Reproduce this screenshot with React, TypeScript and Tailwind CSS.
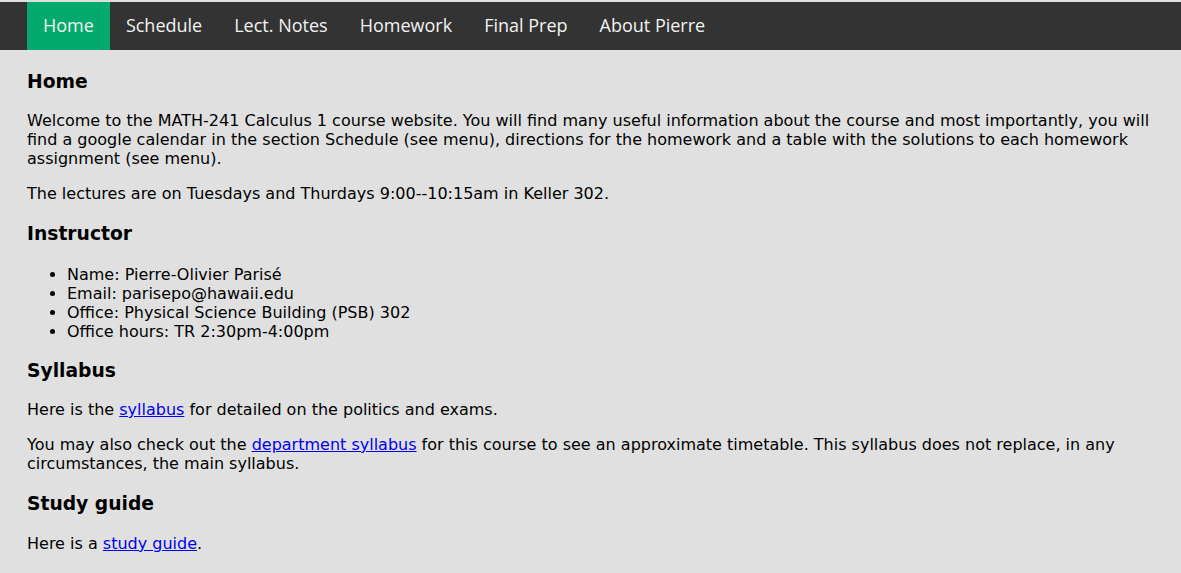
const navItems = ["Home", "Schedule", "Lect. Notes", "Homework", "Final Prep", "About Pierre"];

const Link = ({ children }: { children: React.ReactNode }) => (
  <a href="#" className="text-[#0000ee] underline">
    {children}
  </a>
);

const App = () => {
  return (
    <div className="min-h-[573px] bg-[#e0e0e0] pt-[2px] text-black" style={{ fontFamily: "'DejaVu Sans', sans-serif" }}>
      <nav className="flex h-12 bg-[#333333] px-[27px]">
        {navItems.map((item, i) => (
          <a
            key={item}
            href="#"
            className={`flex items-center px-4 pb-[2px] text-[18px] text-[#f2f2f2] ${i === 0 ? "bg-[#04aa6d]" : ""}`}
            style={{ fontFamily: "'Open Sans', sans-serif" }}
          >
            {item}
          </a>
        ))}
      </nav>

      <div className="px-[27px] pt-[1px] text-[16px] leading-[19px]">
        <h3 className="mt-[20px] mb-[18px] text-[18.72px] font-bold leading-[22px]">Home</h3>
        <p className="mb-4">
          Welcome to the MATH-241 Calculus 1 course website. You will find many useful information about the course
          and most importantly, you will find a google calendar in the section Schedule (see menu), directions for the
          homework and a table with the solutions to each homework assignment (see menu).
        </p>
        <p>The lectures are on Tuesdays and Thurdays 9:00--10:15am in Keller 302.</p>

        <h3 className="mt-[20px] mb-[20px] text-[18.72px] font-bold leading-[22px]">Instructor</h3>
        <ul className="list-disc pl-10">
          <li>Name: Pierre-Olivier Parisé</li>
          <li>Email: parisepo@hawaii.edu</li>
          <li>Office: Physical Science Building (PSB) 302</li>
          <li>Office hours: TR 2:30pm-4:00pm</li>
        </ul>

        <h3 className="mt-[19px] mb-[18px] text-[18.72px] font-bold leading-[22px]">Syllabus</h3>
        <p className="mb-4">
          Here is the <Link>syllabus</Link> for detailed on the politics and exams.
        </p>
        <p>
          You may also check out the <Link>department syllabus</Link> for this course to see an approximate timetable.
          This syllabus does not replace, in any circumstances, the main syllabus.
        </p>

        <h3 className="mt-[20px] mb-[19px] text-[18.72px] font-bold leading-[22px]">Study guide</h3>
        <p>
          Here is a <Link>study guide</Link>.
        </p>
      </div>
    </div>
  );
};

export default App;
